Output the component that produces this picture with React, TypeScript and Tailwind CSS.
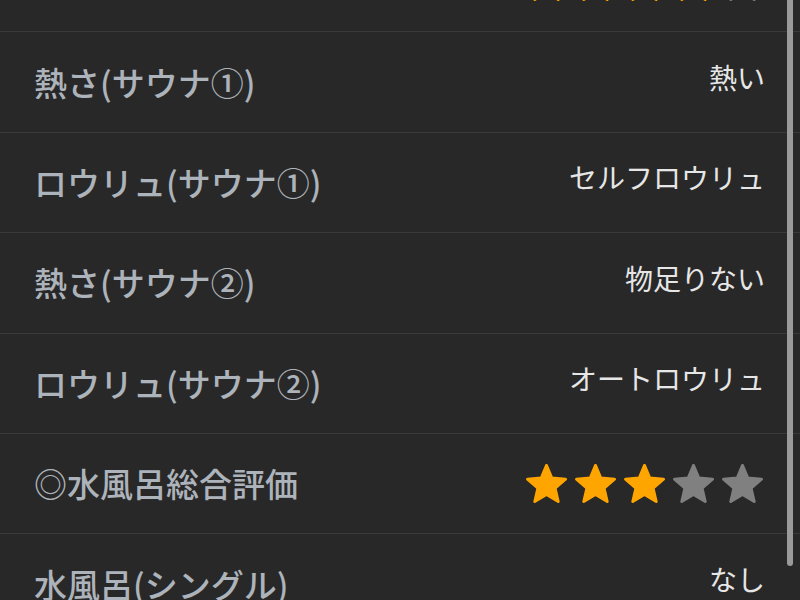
import type { ReactNode } from "react";

type Row = { label: string; value?: string; stars?: number };

const rows: Row[] = [
  { label: "◎サウナ総合評価", stars: 4 },
  { label: "熱さ(サウナ①)", value: "熱い" },
  { label: "ロウリュ(サウナ①)", value: "セルフロウリュ" },
  { label: "熱さ(サウナ②)", value: "物足りない" },
  { label: "ロウリュ(サウナ②)", value: "オートロウリュ" },
  { label: "◎水風呂総合評価", stars: 3 },
  { label: "水風呂(シングル)", value: "なし" },
];

function Star({ on }: { on: boolean }) {
  const c = on ? "#ffa500" : "#808080";
  return (
    <svg width="41" height="39" viewBox="1.25 1.25 21.5 20.5">
      <path
        d="M12 17.27L18.18 21l-1.64-7.03L22 9.24l-7.19-.61L12 2 9.19 8.63 2 9.24l5.46 4.73L5.82 21z"
        fill={c}
        stroke={c}
        strokeWidth="1.5"
        strokeLinejoin="round"
      />
    </svg>
  );
}

function Stars({ n }: { n: number }) {
  return (
    <div className="mr-[2px] flex items-center gap-[8px]">
      {[0, 1, 2, 3, 4].map((i) => (
        <Star key={i} on={i < n} />
      ))}
    </div>
  );
}

function Line({ label, children }: { label: string; children: ReactNode }) {
  return (
    <div className="flex h-[100.4px] shrink-0 items-center justify-between border-b border-[#3a3a3a] pl-[34px] pr-[35px]">
      <div className="text-[33px] font-medium leading-none text-[#adb3ba]">{label}</div>
      {children}
    </div>
  );
}

export default function App() {
  return (
    <div
      className="relative h-[600px] w-[800px] overflow-hidden bg-[#282828]"
      style={{ fontFamily: '"Noto Sans CJK JP", "Noto Sans", sans-serif' }}
    >
      <div className="-mt-[68px] flex flex-col">
        {rows.map((r) => (
          <Line key={r.label} label={r.label}>
            {r.stars !== undefined ? (
              <Stars n={r.stars} />
            ) : (
              <div className="pb-[10px] text-[28px] leading-none text-[#e6e6e6]">{r.value}</div>
            )}
          </Line>
        ))}
      </div>
      {/* overlay scrollbar */}
      <div className="absolute right-[7px] top-0 h-[566px] w-[6px] rounded-b-full bg-[#9a9a9a]" />
    </div>
  );
}
